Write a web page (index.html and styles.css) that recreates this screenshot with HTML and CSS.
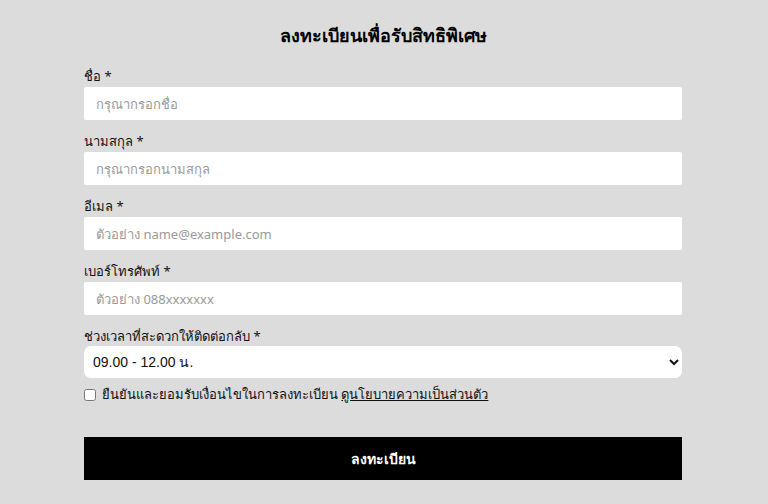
FILE: index.html
```html
<!DOCTYPE html>
<html lang="th">
<head>
	<meta charset="utf-8">
	<title>ลงทะเบียนเพื่อรับสิทธิพิเศษ</title>
	<link rel="stylesheet" href="styles.css">
</head>
<body>
	<div class="container">
		<h1>ลงทะเบียนเพื่อรับสิทธิพิเศษ</h1>
		<form id="register-form">
			<div class="form-group">
				<label for="first-name">ชื่อ *</label>
				<input type="text" id="first-name" placeholder="กรุณากรอกชื่อ">
			</div>
			<div class="form-group">
				<label for="last-name">นามสกุล *</label>
				<input type="text" id="last-name" placeholder="กรุณากรอกนามสกุล">
			</div>
			<div class="form-group">
				<label for="email">อีเมล *</label>
				<input type="text" id="email" placeholder="ตัวอย่าง name@example.com">
			</div>
			<div class="form-group">
				<label for="phone">เบอร์โทรศัพท์ *</label>
				<input type="text" id="phone" placeholder="ตัวอย่าง 088xxxxxxx">
			</div>
			<div class="form-group">
				<label for="time">ช่วงเวลาที่สะดวกให้ติดต่อกลับ *</label>
				<select id="time">
					<option>09.00 - 12.00 น.</option>
					<option>13.00 - 17.00 น.</option>
				</select>
			</div>
			<div class="check-row">
				<input type="checkbox" id="accept">
				<label for="accept">ยืนยันและยอมรับเงื่อนไขในการลงทะเบียน <a href="#">ดูนโยบายความเป็นส่วนตัว</a></label>
			</div>
			<button type="submit">ลงทะเบียน</button>
		</form>
	</div>
</body>
</html>
```

FILE: styles.css
```css
body {
	margin: 0;
	background-color: #dcdcdc;
	font-family: "Noto Sans", "DejaVu Sans", sans-serif;
	color: #111;
}

.container {
	width: 600px;
	margin: 0 auto;
	padding: 22px 2px 0 0;
	box-sizing: border-box;
}

h1 {
	margin: 0 0 18px;
	text-align: center;
	font-size: 18px;
	font-weight: bold;
	line-height: 26px;
	color: #000;
}

.form-group {
	margin-bottom: 11px;
}

.form-group label {
	display: block;
	font-size: 13px;
	line-height: 20px;
	margin-bottom: 1px;
}

.form-group select {
	margin-top: -1px;
}

input[type="text"] {
	display: block;
	width: 100%;
	height: 33px;
	padding: 0 12px;
	border: none;
	border-radius: 2px;
	background: #fff;
	font-family: inherit;
	font-size: 13px;
	box-sizing: border-box;
}

input::placeholder {
	color: #9a9a9a;
}

select {
	display: block;
	width: 100%;
	height: 32px;
	padding: 0 5px;
	border: none;
	border-radius: 7px;
	background: #fff;
	font-family: "Liberation Sans", Arial, sans-serif;
	font-size: 14px;
	color: #111;
	box-sizing: border-box;
}

.check-row {
	display: flex;
	align-items: center;
	gap: 6px;
	font-size: 13px;
	margin-top: -5px;
}

.check-row input {
	margin: 0;
	width: 12px;
	height: 12px;
}

.check-row a {
	color: #111;
}

button {
	display: block;
	width: 100%;
	height: 43px;
	margin-top: 32px;
	background-color: #000;
	color: #fff;
	border: none;
	font-family: inherit;
	font-size: 14px;
	font-weight: bold;
	cursor: pointer;
}
```
